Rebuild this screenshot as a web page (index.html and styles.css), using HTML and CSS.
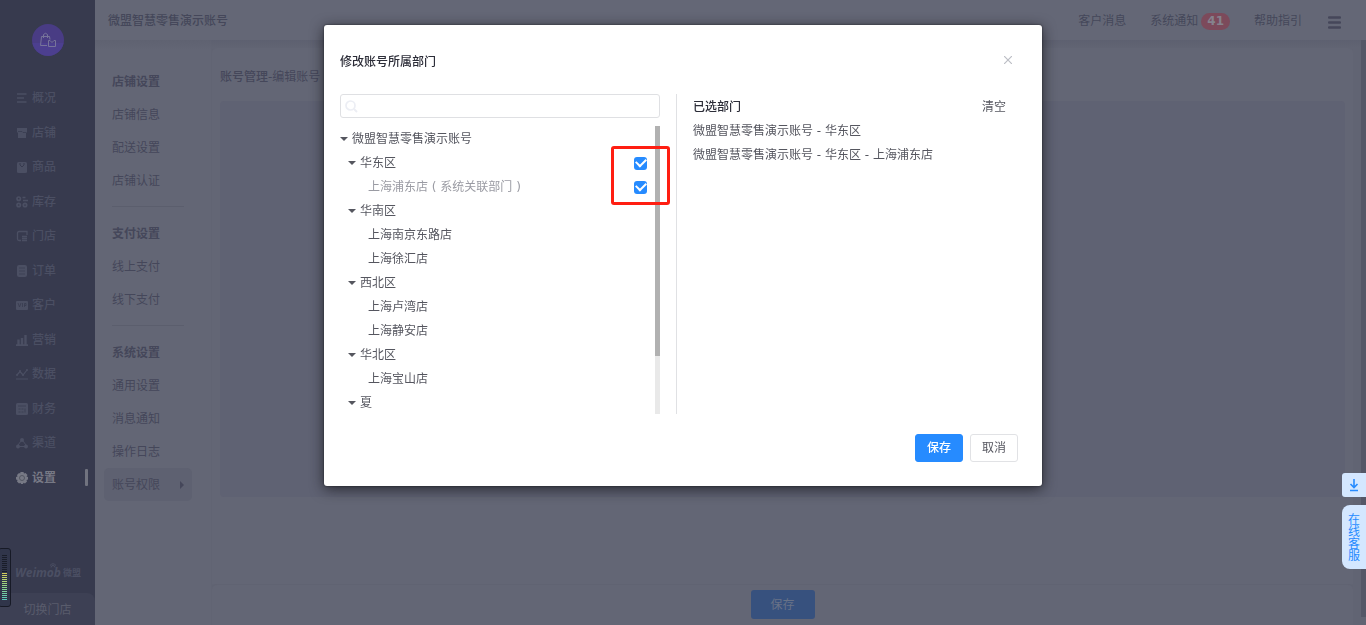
FILE: index.html
```html
<!DOCTYPE html>
<html lang="zh-CN">
<head>
<meta charset="utf-8">
<title>账号管理</title>
<link rel="stylesheet" href="styles.css">
</head>
<body>
<div class="app">
  <aside class="sidebar">
    <div class="brand">
      <svg class="brand-icon" viewBox="0 0 32 32"><path d="M0 19h32a16 16 0 0 1-32 0z" fill="#50429a" opacity=".5"/><g fill="none" stroke="#77749a" stroke-width="1"><path d="M15 21.500H8.500L9.500 12.500H17.500L18 15.500M11.500 14V10.500Q13.500 8 15.500 10.500V14"/><path d="M16.500 16.500H18L20 18.500L22 16.500H23.500V22.500H16.500z"/></g></svg>
    </div>
    <nav class="menu">
      <a class="menu-item" href="#"><svg viewBox="0 0 12 12"><path d="M1 2h9.500M1 6h7M1 10h9.500" fill="none" stroke="currentColor" stroke-width="1.500"/></svg>概况</a>
      <a class="menu-item" href="#"><svg viewBox="0 0 12 12"><path d="M1 1h10v4l-1 1v5H2V6L1 5z" fill="currentColor"/><path d="M2 4.500h4l1 1h3" fill="none" stroke="#373a4e" stroke-width=".7"/></svg>店铺</a>
      <a class="menu-item" href="#"><svg viewBox="0 0 12 12"><rect x="1" y="1" width="10" height="11" rx="1.500" fill="currentColor"/><path d="M4 2v2l2 2 2-2V2" fill="none" stroke="#373a4e"/></svg>商品</a>
      <a class="menu-item" href="#"><svg viewBox="0 0 12 12"><g fill="none" stroke="currentColor" stroke-width="1.700"><circle cx="2.700" cy="2.700" r="1.700"/><circle cx="2.700" cy="9" r="1.700"/><circle cx="9" cy="9" r="1.700"/><path d="M6.500 1.500h3M7 4.500h5"/></g></svg>库存</a>
      <a class="menu-item" href="#"><svg viewBox="0 0 12 12"><path d="M11 5V1.500H3Q1.500 1.500 1.500 3V9Q1.500 10.500 3 10.500H5M6 6.500h5M6 8.500h5M6 10.500h5" fill="none" stroke="currentColor" stroke-width="1.300"/></svg>门店</a>
      <a class="menu-item" href="#"><svg viewBox="0 0 12 12"><rect x="1" width="10" height="12" rx="2" fill="currentColor"/><path d="M3 3h6M3 6h6M3 9h6" stroke="#373a4e" stroke-width=".6"/></svg>订单</a>
      <a class="menu-item" href="#"><svg viewBox="0 0 12 12"><rect y="2" width="12" height="9" rx="1" fill="currentColor"/><path d="M2 4l1.500 4L5 4M6.500 4v4M8.500 8V4.500H10V6.500H8.500" fill="none" stroke="#373a4e" stroke-width=".7"/></svg>客户</a>
      <a class="menu-item" href="#"><svg viewBox="0 0 12 12"><path d="M0 11.500h12M2.500 11V5.500M6 11V4M9.500 11V1" fill="none" stroke="currentColor" stroke-width="2.400"/></svg>营销</a>
      <a class="menu-item" href="#"><svg viewBox="0 0 12 12"><path d="M1 7l3-3.500L7 7l4-5M0 11h12" fill="none" stroke="currentColor" stroke-width="1.200"/><g fill="currentColor"><circle cx="1" cy="7" r="1"/><circle cx="4" cy="3" r="1"/><circle cx="7" cy="7" r="1"/><circle cx="11" cy="2" r="1"/></g></svg>数据</a>
      <a class="menu-item" href="#"><svg viewBox="0 0 12 12"><rect width="12" height="12" rx="1.500" fill="currentColor"/><path d="M2 3h8M2.500 6h2M5.500 6h2M2.500 9h2M5.500 9h2M9 5.500v4" stroke="#373a4e" stroke-width=".7"/></svg>财务</a>
      <a class="menu-item" href="#"><svg viewBox="0 0 12 12"><path d="M5 4L2 8M7 4l3 4M3 9.500h6" fill="none" stroke="currentColor"/><g fill="currentColor"><circle cx="6" cy="3" r="2"/><circle cx="2" cy="9.500" r="2"/><circle cx="10" cy="9.500" r="2"/></g></svg>渠道</a>
      <a class="menu-item active" href="#"><svg viewBox="0 0 12 12"><path d="M4.500 0h3l.5 1.500L9.500 1l2 2-1 1.500 1.500.5v2.500l-1.500.5.5 1.500-2 2-1.500-.7L7 12H5l-.5-1.200L3 11.500 1 9.500 1.500 8 0 7.500V5l1.500-.5L1 3l2-2 1.200.5z" fill="currentColor"/><circle cx="6" cy="6" r="2.500" fill="none" stroke="#50535f" stroke-width=".9"/></svg>设置</a>
    </nav>
    <div class="sidebar-logo"><b>Weimob</b><span>微盟</span><svg viewBox="0 0 6 5"><path d="M1 4.500A2 2 0 0 1 5 4.500M0 2.500Q3-1 6 2.500" fill="none" stroke="currentColor"/></svg></div>
    <button class="switch" type="button">切换门店</button>
  </aside>

  <div class="page">
    <header class="topbar">
      <strong class="shop">微盟智慧零售演示账号</strong>
      <nav class="topnav">
        <a href="#">客户消息</a>
        <a href="#">系统通知<span class="count">41</span></a>
        <a href="#">帮助指引</a>
        <button class="burger" type="button" aria-label="菜单"><svg viewBox="0 0 13 13"><path d="M1 1.500h11M1 6.500h11M1 11.500h11" stroke="currentColor" stroke-width="2.400" stroke-linecap="round"/></svg></button>
      </nav>
    </header>
    <div class="workspace">
      <nav class="subnav">
        <section>
          <h2>店铺设置</h2>
          <a href="#">店铺信息</a><a href="#">配送设置</a><a href="#">店铺认证</a>
        </section>
        <section>
          <h2>支付设置</h2>
          <a href="#">线上支付</a><a href="#">线下支付</a>
        </section>
        <section>
          <h2>系统设置</h2>
          <a href="#">通用设置</a><a href="#">消息通知</a><a href="#">操作日志</a><a class="current" href="#">账号权限</a>
        </section>
      </nav>
      <main class="content">
        <div class="sheet">
          <h1><b>账号管理</b>-编辑账号</h1>
          <div class="panel"></div>
        </div>
        <div class="actions"><button class="save-page" type="button">保存</button></div>
      </main>
      <div class="page-scroll"></div>
    </div>
  </div>
</div>

<div class="recorder"><span class="level idle"></span><span class="level live"></span></div>

<div class="modal-layer">
  <div class="modal" role="dialog" aria-labelledby="modal-title">
    <header class="modal-head">
      <h2 id="modal-title">修改账号所属部门</h2>
      <button class="close" type="button" aria-label="关闭"><svg viewBox="0 0 8 8"><path d="M0 0l8 8M8 0L0 8" stroke="currentColor" stroke-width="1.200"/></svg></button>
    </header>
    <div class="modal-body">
      <div class="picker">
        <label class="search">
          <svg viewBox="0 0 13 13"><circle cx="5.500" cy="5.500" r="4.500" fill="none" stroke="currentColor" stroke-width="1.700"/><path d="M9 9l3 3" stroke="currentColor" stroke-width="2"/></svg>
          <input type="text" aria-label="搜索部门">
        </label>
        <div class="tree-box">
          <ul class="tree">
            <li><div class="node parent">微盟智慧零售演示账号</div>
              <ul>
                <li><label class="node parent">华东区<input type="checkbox" checked></label>
                  <ul><li><label class="node linked">上海浦东店 ( 系统关联部门 )<input type="checkbox" checked></label></li></ul></li>
                <li><div class="node parent">华南区</div>
                  <ul><li><div class="node">上海南京东路店</div></li><li><div class="node">上海徐汇店</div></li></ul></li>
                <li><div class="node parent">西北区</div>
                  <ul><li><div class="node">上海卢湾店</div></li><li><div class="node">上海静安店</div></li></ul></li>
                <li><div class="node parent">华北区</div>
                  <ul><li><div class="node">上海宝山店</div></li></ul></li>
                <li><div class="node parent">夏</div></li>
              </ul>
            </li>
          </ul>
          <div class="track"><div class="thumb"></div></div>
          <div class="highlight"></div>
        </div>
      </div>
      <section class="chosen">
        <header><h3>已选部门</h3><button class="clear" type="button">清空</button></header>
        <ul>
          <li>微盟智慧零售演示账号 - 华东区</li>
          <li>微盟智慧零售演示账号 - 华东区 - 上海浦东店</li>
        </ul>
      </section>
    </div>
    <footer class="modal-foot">
      <button class="btn primary" type="button">保存</button>
      <button class="btn" type="button">取消</button>
    </footer>
  </div>
</div>

<div class="helpers">
  <button class="download" type="button" aria-label="下载"><svg viewBox="0 0 12 14"><path d="M6 1v8M2.500 6L6 9.500 9.500 6M2 12.500h8" fill="none" stroke="currentColor" stroke-width="1.600"/></svg></button>
  <button class="service" type="button">在线客服</button>
</div>
</body>
</html>
```
FILE: styles.css
```css
* { box-sizing: border-box; }
body {
  margin: 0;
  height: 100vh;
  overflow: hidden;
  font: 12px/24px "DejaVu Sans", "Noto Sans CJK SC", sans-serif;
  color: #45475a;
  background: #606373;
}
h1, h2, h3, ul { margin: 0; padding: 0; font-size: 12px; font-weight: 400; list-style: none; }
a { color: inherit; text-decoration: none; }
button { margin: 0; padding: 0; border: 0; background: none; color: inherit; font: inherit; }
svg { display: block; }

.app { display: flex; height: 100vh; }

/* Main menu */
.sidebar { display: flex; flex-direction: column; width: 95px; background: #373a4e; color: #4b4f63; }
.brand { padding: 24px 0 30px 32px; }
.brand-icon { width: 32px; height: 32px; border-radius: 50%; background: #493c84; }
.menu { display: flex; flex-direction: column; justify-content: space-between; height: 404px; }
.menu-item { display: flex; align-items: center; gap: 4px; padding-left: 16px; font-weight: 500; }
.menu-item svg { width: 12px; height: 12px; }
.menu-item.active { color: #777985; font-weight: 700; }
.menu-item.active::after { content: ""; width: 3px; height: 17px; margin: 0 7px 0 auto; background: #71737f; border-radius: 1px; }
.sidebar-logo { position: relative; display: flex; align-items: center; gap: 2px; height: 24px; margin-top: auto; margin-bottom: 8px; padding-left: 15px; }
.sidebar-logo b { font: italic 700 12px/24px "Open Sans", sans-serif; }
.sidebar-logo span { font-size: 9px; font-weight: 700; }
.sidebar-logo svg { position: absolute; left: 50px; top: 2px; width: 6px; height: 5px; }
.switch { height: 32px; padding-top: 2px; background: #3d4054; border-radius: 0 8px 0 0; color: #595c6c; }

/* Top bar */
.page { display: flex; flex: 1; flex-direction: column; min-width: 0; }
.topbar { display: flex; align-items: center; justify-content: space-between; height: 40px; padding: 2px 25px 0 13px; background: #646776; }
.shop { font-weight: 500; }
.topnav { display: flex; align-items: center; gap: 24px; }
.topnav a { display: flex; align-items: center; gap: 3px; }
.count { height: 17px; padding: 0 6px; border-radius: 9px; background: #7c4a5b; color: #85828d; font-weight: 700; line-height: 17px; }
.burger { padding: 2px 0 0 2px; }
.burger svg { width: 13px; height: 13px; }

/* Settings page */
.workspace { display: flex; flex: 1; min-height: 0; background: linear-gradient(#5d6070, #616473 8px); }
.subnav { width: 116px; padding: 25px 19px 0 9px; background: linear-gradient(#5f6271, #636675 10px); }
.subnav section + section { margin-top: 9px; }
.subnav section + section::before { content: ""; display: block; height: 1px; margin: 0 8px 10px; background: #5b5e6d; }
.subnav h2, .subnav a { display: flex; align-items: center; height: 33px; padding: 0 8px; }
.subnav h2 { font-weight: 700; }
.subnav .current { justify-content: space-between; border-radius: 5px; background: #5e6171; }
.subnav .current::after { content: ""; border: 4px solid transparent; border-left-color: #45475a; border-right: 0; }
.content { display: flex; flex: 1; flex-direction: column; min-width: 0; margin: 8px 8px 0 1px; }
.sheet { display: flex; flex: 1; flex-direction: column; padding: 17px 8px 87px; border-radius: 5px 5px 0 0; background: #636675; }
.sheet h1 b { font-weight: 500; }
.panel { flex: 1; margin-top: 12px; border-radius: 4px; background: #5f6273; }
.actions { height: 41px; padding-top: 5px; border-top: 1px solid #606372; border-radius: 5px 5px 0 0; background: #636675; text-align: center; }
.save-page { width: 64px; height: 29px; border-radius: 3px; background: #37517e; color: #687287; }
.page-scroll { width: 5px; margin-bottom: 8px; background: #545767; }

/* Level meter at the window edge */
.recorder { position: fixed; left: -2px; top: 548px; display: flex; flex-direction: column; width: 13px; height: 59px; padding: 6px 3px 0; border: 1px solid #171a26; border-radius: 3px; background: #30354a; }
.level { width: 5px; }
.idle { height: 18px; background: repeating-linear-gradient(#191d29 0 1px, transparent 1px 2px); }
.live { height: 28px; background: repeating-linear-gradient(transparent 0 1px, #30354a 1px 2px), linear-gradient(#d9cf5a, #8fd58c 50%, #55c9c0); }

/* Department dialog */
.modal-layer { position: fixed; inset: 0; display: flex; justify-content: center; align-items: flex-start; padding-top: 25px; }
.modal { width: 718px; padding: 24px 24px 24px 16px; border-radius: 3px; background: #fff; color: #55565f; box-shadow: 0 3px 14px rgba(20, 20, 24, .75), 0 0 2px rgba(20, 20, 24, .8); }
.modal-head { display: flex; align-items: flex-start; justify-content: space-between; padding-right: 6px; }
.modal-head h2 { padding-top: 1px; }
.modal-head h2, .chosen h3 { color: #2c2d38; font-weight: 500; }
.close { padding-top: 7px; color: #bcbec5; }
.close svg { width: 8px; height: 8px; }
.modal-body { display: flex; margin: 20px 0; }
.picker { width: 336px; padding-right: 16px; }
.search { display: flex; align-items: center; height: 24px; padding-left: 4px; border: 1px solid #dfe0e3; border-radius: 3px; color: #eceef4; }
.search svg { width: 13px; height: 13px; }
.search input { flex: 1; min-width: 0; border: 0; outline: 0; background: none; font: inherit; }
.tree-box { position: relative; margin-top: 8px; }
.tree ul { padding-left: 8px; }
.node { display: flex; align-items: center; height: 24px; padding: 2px 0 0 12px; }
.node.parent { padding-left: 0; }
.node.parent::before { content: ""; margin-right: 4px; border: 4px solid transparent; border-top-color: #55565f; border-bottom: 0; }
.node.linked { color: #9a9ba3; }
.node input { appearance: none; display: grid; place-items: center; width: 13px; height: 13px; margin: 0 13px 0 auto; border-radius: 3px; background: #268bff; }
.node input:checked::before { content: ""; width: 8px; height: 5px; margin-bottom: 3px; border: solid #fff; border-width: 0 0 2px 2px; transform: rotate(-45deg); }
.track { position: absolute; inset: 0 0 0 auto; width: 5px; background: #e9e9e9; }
.thumb { height: 80%; background: #b1b1b1; }
.highlight { position: absolute; top: 20px; right: -10px; width: 59px; height: 59px; border: 3px solid #ff1e12; border-radius: 3px; }
.chosen { flex: 1; padding: 1px 0 0 16px; border-left: 1px solid #e0e1e4; }
.chosen header { display: flex; justify-content: space-between; padding-right: 12px; }
.modal-foot { display: flex; justify-content: flex-end; gap: 7px; }
.btn { width: 48px; height: 28px; border: 1px solid #e1e2e5; border-radius: 3px; background: #fff; }
.btn.primary { border-color: #268bff; background: #268bff; color: #fff; font-weight: 500; }

/* Floating helpers */
.helpers { position: fixed; right: 0; top: 473px; display: flex; flex-direction: column; gap: 8px; color: #268bff; }
.download { display: grid; place-items: center; width: 24px; height: 24px; border-radius: 3px 0 0 3px; background: #d4e7ff; }
.download svg { width: 12px; height: 14px; }
.service { width: 24px; height: 64px; padding: 2px 6px 0; border-radius: 8px 0 0 8px; background: #d4e7ff; line-height: 12px; }
```
